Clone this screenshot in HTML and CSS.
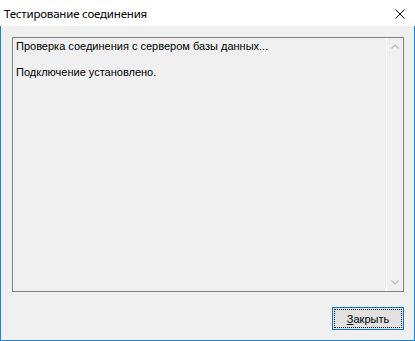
FILE: index.html
```html
<!DOCTYPE html>
<html>
  <head>
    <meta charset="utf-8">
    <title>Тестирование соединения</title>
    <link rel="stylesheet" href="styles.css">
  </head>
  <body>
    <div class="window">
      <div class="titlebar">
        <span class="caption">Тестирование соединения</span>
        <svg class="close" width="10" height="10" viewBox="0 0 10 10">
          <path d="M0.5 0.5 L9.5 9.5 M9.5 0.5 L0.5 9.5" stroke="#000" stroke-width="1" fill="none"/>
        </svg>
      </div>
      <div class="client">
        <div class="log">
          <div class="log-text">
            <p>Проверка соединения с сервером базы данных...</p>
            <p>&nbsp;</p>
            <p>Подключение установлено.</p>
          </div>
          <div class="scrollbar">
            <svg width="16" height="17" viewBox="0 0 16 17">
              <path d="M4.5 10.5 L8 7 L11.5 10.5" stroke="#bfbfbf" stroke-width="1.4" fill="none"/>
            </svg>
            <svg width="16" height="17" viewBox="0 0 16 17">
              <path d="M4.5 6.5 L8 10 L11.5 6.5" stroke="#bfbfbf" stroke-width="1.4" fill="none"/>
            </svg>
          </div>
        </div>
        <div class="buttons">
          <button class="btn"><span class="focus"><u>З</u>акрыть</span></button>
        </div>
      </div>
    </div>
  </body>
</html>
```

FILE: styles.css
```css
body, html {
  margin: 0;
}

body {
  width: 415px;
  height: 341px;
  overflow: hidden;
}

.window {
  display: flex;
  flex-direction: column;
  width: 415px;
  height: 341px;
}

.titlebar {
  display: flex;
  align-items: center;
  justify-content: space-between;
  height: 26px;
  background: #fff;
  padding: 0 10px 0 4px;
  box-sizing: border-box;
}

.caption {
  font-family: "Noto Sans", sans-serif;
  font-size: 11.5px;
  letter-spacing: -0.2px;
  color: #000;
  margin-top: 1px;
}

.close {
  display: block;
  margin-top: 2px;
}

.client {
  flex: 1;
  display: flex;
  flex-direction: column;
  gap: 15px;
  background: #f0f0f0;
  border: 1px solid #1883d7;
  border-top: none;
  padding: 11px 10px 10px 11px;
}

.log {
  display: flex;
  height: 255px;
  border: 1px solid #828282;
  box-sizing: border-box;
  background: #f0f0f0;
}

.log-text {
  flex: 1;
  padding: 2px 3px;
  font-family: "Liberation Sans", Arial, sans-serif;
  font-size: 11px;
  line-height: 13px;
  color: #000;
}

.log-text p {
  margin: 0;
}

.scrollbar {
  display: flex;
  flex-direction: column;
  justify-content: space-between;
  width: 16px;
  border-left: 1px solid #fcfcfc;
  background: #f0f0f0;
}

.scrollbar svg {
  display: block;
}

.buttons {
  display: flex;
  justify-content: flex-end;
}

.btn {
  width: 72px;
  height: 23px;
  padding: 1px;
  margin: 0;
  border: 1px solid #0078d7;
  background: #e1e1e1;
  box-sizing: border-box;
  font-family: "Liberation Sans", Arial, sans-serif;
  font-size: 11px;
  color: #000;
}

.focus {
  display: flex;
  align-items: center;
  justify-content: center;
  height: 100%;
  border: 1px dotted #000;
  box-sizing: border-box;
}
```
